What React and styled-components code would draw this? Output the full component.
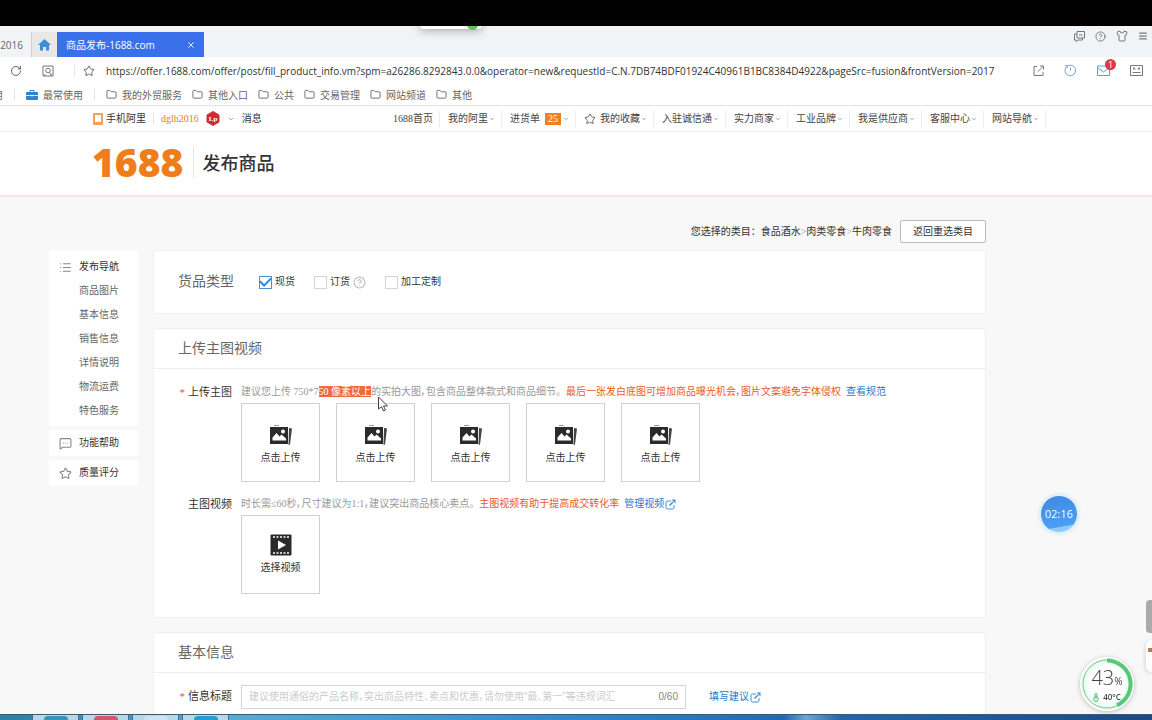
import React, { useState } from 'react';
import styled, { createGlobalStyle } from 'styled-components';
import {
  ChevronDown,
  CircleQuestionMark,
  Folder,
  List,
  Menu,
  MessageSquareMore,
  RotateCw,
  Shirt,
  Star,
  X,
} from 'lucide-react';

const uiFont = '"Open Sans", "Noto Sans", "Noto Sans CJK SC", sans-serif';
const pageFont = '"Liberation Serif", "Noto Sans CJK SC", sans-serif';

const GlobalStyle = createGlobalStyle`
  * {
    box-sizing: border-box;
  }

  body {
    margin: 0;
    background: #f8f8f8;
    color: #333;
    font: 10px/20px ${pageFont};
    overflow: hidden;
  }

  button, input {
    font: inherit;
    color: inherit;
  }

  a {
    color: inherit;
    text-decoration: none;
  }

  svg {
    flex: none;
  }
`;

const Screen = styled.div`
  display: flex;
  flex-direction: column;
  height: 100vh;
  overflow: hidden;
`;

/* ---------- browser ---------- */

const TopEdge = styled.div`
  position: relative;
  z-index: 2;
  flex: none;
  height: 26px;
  background: #000;
`;

const HiddenPill = styled.div`
  position: absolute;
  z-index: 1;
  top: 10px;
  left: 420px;
  width: 62px;
  height: 19px;
  background: #fff;
  border-radius: 4px;
  box-shadow: 0 2px 8px rgba(0, 0, 0, 0.3);

  &::after {
    content: '';
    position: absolute;
    right: 4px;
    bottom: -1px;
    width: 11px;
    height: 11px;
    border-radius: 50%;
    background: #5cc653;
  }
`;

const TabStrip = styled.div`
  display: flex;
  flex: none;
  align-items: flex-end;
  height: 31px;
  background: #f1f4f7;
  font-family: ${uiFont};
  color: #666;
`;

const BackTab = styled.button`
  display: flex;
  justify-content: flex-end;
  align-items: center;
  width: 31px;
  height: 25px;
  padding: 0 8px 0 0;
  border: 0;
  background: none;
`;

const HomeTab = styled.button`
  display: flex;
  align-items: center;
  justify-content: center;
  width: 26px;
  height: 25px;
  padding: 0;
  border: 0;
  border-left: 1px solid #cfcfcf;
  background: #e9e8e7;
`;

const ActiveTab = styled.div`
  display: flex;
  align-items: center;
  justify-content: space-between;
  width: 147px;
  height: 25px;
  padding: 0 8px 0 9px;
  background: #3a71ea;
  color: #fff;
`;

const IconButton = styled.button`
  display: flex;
  align-items: center;
  justify-content: center;
  padding: 0;
  border: 0;
  background: none;
`;

const WindowTools = styled.div`
  display: flex;
  align-self: flex-start;
  gap: 10px;
  margin-left: auto;
  padding: 4px 4px 0 0;
`;

const AddressBar = styled.div`
  display: flex;
  flex: none;
  align-items: center;
  height: 27px;
  padding: 0 9px 0 10px;
  background: #fff;
  color: #777;
`;

const AddressLeft = styled.div`
  display: flex;
  align-items: center;
  gap: 20px;
`;

const Divider = styled.span`
  flex: none;
  width: 1px;
  height: 12px;
  background: #e4e4e4;
`;

const UrlInput = styled.input`
  flex: 1;
  min-width: 0;
  margin: 0 12px 0 11px;
  padding: 0;
  border: 0;
  outline: 0;
  background: none;
  font-family: ${uiFont};
  color: #333;
`;

const AddressRight = styled.div`
  display: flex;
  align-items: center;
  gap: 20px;
`;

const MailButton = styled(IconButton)`
  position: relative;
`;

const MailCount = styled.span`
  position: absolute;
  top: -6px;
  right: -6px;
  width: 11px;
  height: 11px;
  border-radius: 50%;
  background: #dd3b3f;
  color: #fff;
  font: 9px/11px ${uiFont};
`;

const BookmarkBar = styled.div`
  display: flex;
  flex: none;
  align-items: center;
  gap: 11px;
  height: 22px;
  background: #fff;
  border-bottom: 1px solid #e2e2e2;
  font-family: ${uiFont};
  color: #666;
`;

const ClippedMark = styled.span`
  display: flex;
  flex: none;
  justify-content: flex-end;
  width: 3px;
  overflow: hidden;
`;

const Bookmark = styled.a`
  display: flex;
  align-items: center;
  gap: 5px;
  white-space: nowrap;
`;

/* ---------- site header ---------- */

const SiteNav = styled.nav`
  display: flex;
  flex: none;
  align-items: center;
  justify-content: space-between;
  height: 26px;
  padding: 0 106px 0 93px;
  background: #fff;
  border-bottom: 1px solid #ececec;
  white-space: nowrap;
`;

const NavGroup = styled.div`
  display: flex;
  align-items: center;
  gap: ${(p) => p.$gap || 0}px;
`;

const NavLink = styled.a`
  display: flex;
  align-items: center;
  height: 18px;
  gap: 1px;
  padding: 0 6px 0 8px;
  border-right: 1px solid #eee;
  color: #444;
`;

const PhoneLink = styled.a`
  display: flex;
  align-items: center;
  gap: 3px;
`;

const UserLink = styled.a`
  color: #ee7a22;
`;

const CountBadge = styled.span`
  margin: 0 1px 0 4px;
  padding: 0 3px;
  background: #ee7f22;
  color: #fff;
  line-height: 12px;
`;

const SiteHeader = styled.header`
  display: flex;
  flex: none;
  align-items: center;
  height: 65px;
  padding: 0 0 4px 92px;
  background: #fff;
  border-bottom: 2px solid #fae6de;
`;

const Logo = styled.a`
  padding-right: 10px;
  border-right: 1px solid #e6e6e6;
  font: 800 39px/32px "Open Sans", "Noto Sans", sans-serif;
  color: #ef7d1a;
`;

const PageTitle = styled.h1`
  margin: 0 0 0 8px;
  font: 500 18px/24px "Noto Sans CJK SC", sans-serif;
  color: #333;
`;

/* ---------- page ---------- */

const Page = styled.div`
  flex: 1;
  min-height: 0;
  padding: 23px 166px 0 49px;
  overflow: hidden;
`;

const CategoryRow = styled.div`
  display: flex;
  align-items: center;
  justify-content: flex-end;
  gap: 8px;
  margin-bottom: 7px;

  i {
    font-style: normal;
    color: #999;
  }
`;

const OutlineButton = styled.button`
  height: 23px;
  padding: 0 12px;
  border: 1px solid #bbb;
  border-radius: 2px;
  background: #fff;
`;

const Columns = styled.div`
  display: grid;
  grid-template-columns: 89px minmax(0, 1fr);
  gap: 15px;
  align-items: start;
`;

const Sidebar = styled.aside`
  display: flex;
  flex-direction: column;
  gap: 4px;
`;

const SideCard = styled.div`
  padding: ${(p) => p.$pad || '1px 0'};
  border-radius: 2px;
  background: #fff;
`;

const SideItem = styled.a`
  display: grid;
  grid-template-columns: 20px 1fr;
  align-items: center;
  height: 24px;
  padding-left: 10px;
  color: ${(p) => (p.$head ? '#333' : '#666')};

  svg {
    color: #888;
  }

  span {
    grid-column: 2;
  }
`;

const Main = styled.main`
  display: flex;
  flex-direction: column;
  gap: 14px;
`;

const Card = styled.section`
  background: #fff;
  border: 1px solid #efefef;
  border-radius: 3px;
`;

const TypeRow = styled.div`
  display: flex;
  align-items: center;
  gap: 25px;
  height: 62px;
  padding-left: 24px;
`;

const CardTitle = styled.h2`
  margin: 0;
  font-size: 14px;
  font-weight: 400;
  line-height: 20px;
  color: #666;
`;

const CardHead = styled.div`
  padding: 10px 24px 9px;
  border-bottom: 1px solid #f0f0f0;
`;

const CardBody = styled.div`
  display: flex;
  flex-direction: column;
  gap: 11px;
  padding: 12px 24px 23px;
`;

const Options = styled.div`
  display: flex;
  align-items: center;
  gap: 19px;
`;

const Option = styled.label`
  display: flex;
  align-items: center;
  gap: 3px;
`;

const Checkbox = styled.input`
  appearance: none;
  display: flex;
  align-items: center;
  justify-content: center;
  width: 13px;
  height: 13px;
  margin: 0;
  border: 1px solid #d4d4d4;
  background: #fff;

  &:checked {
    border-color: #4a94d6;
  }

  &:checked::after {
    content: '';
    width: 9px;
    height: 5px;
    margin-bottom: 3px;
    border: solid #2f83d0;
    border-width: 0 0 2px 2px;
    transform: rotate(-45deg);
  }
`;

const Field = styled.div`
  display: flex;
  gap: 9px;
`;

const FieldLabel = styled.label`
  flex: none;
  width: 54px;
  font-size: 11px;
  line-height: 22px;
  text-align: right;
  white-space: nowrap;

  b {
    margin-right: 3px;
    font-weight: 400;
    color: #e0524d;
  }
`;

const FieldContent = styled.div`
  flex: 1;
  min-width: 0;
`;

const Hint = styled.p`
  display: flex;
  align-items: center;
  gap: 5px;
  margin: 0;
  line-height: 22px;
  white-space: nowrap;
  color: #999;
  font-feature-settings: 'palt';
`;

const Warn = styled.span`
  color: #ea5b1b;
`;

const BlueLink = styled.a`
  display: inline-flex;
  align-items: center;
  gap: 1px;
  color: #1a7bd4;
`;

const Selected = styled.mark`
  position: relative;
  background: #ef6a3a;
  color: #fff;
`;

const Pointer = styled.svg`
  position: absolute;
  top: 10px;
  right: -18px;
`;

const Tiles = styled.div`
  display: flex;
  flex-wrap: wrap;
  gap: 16px;
`;

const Tile = styled.button`
  display: flex;
  flex-direction: column;
  align-items: center;
  justify-content: center;
  gap: 2px;
  width: 79px;
  height: 79px;
  padding: ${(p) => (p.$video ? 2 : 6)}px 0 0;
  border: 1px solid #d0d0d0;
  background: #fff;
`;

const TitleBox = styled.div`
  display: flex;
  flex: 0 1 445px;
  height: 24px;
  padding: 0 7px;
  border: 1px solid #d4d4d4;
  color: #888;
  font-family: "Liberation Sans", "Noto Sans CJK SC", sans-serif;
`;

const TitleInput = styled.input`
  flex: 1;
  min-width: 0;
  padding: 0;
  border: 0;
  outline: 0;
  font-feature-settings: 'palt';

  &::placeholder {
    color: #ccc;
  }
`;

const Counter = styled.span`
  line-height: 22px;
`;

const TitleRow = styled.div`
  display: flex;
  flex: 1;
  align-items: center;
  gap: 23px;
`;

/* ---------- desktop ---------- */

const Taskbar = styled.footer`
  display: flex;
  flex: none;
  gap: 3px;
  height: 6px;
  padding-left: 32px;
  border-top: 1px solid #3c5b73;
  background: linear-gradient(90deg, #2c7f9f 0, #5aa9d6 20%, #3b93cf 42%, #2169b4 68%, #6fa3d4 70%, #2366aa 73%, #1c4a86 100%);
  overflow: hidden;
`;

const TaskButton = styled.button`
  display: flex;
  justify-content: center;
  width: 47px;
  margin: 0;
  padding: 1px 0 0;
  border: 1px solid #456f8c;
  border-width: 0 1px;
  background: #b5d8ea;

  &::after {
    content: '';
    width: 24px;
    height: 8px;
    border-radius: 4px 4px 0 0;
    background: ${(p) => p.$color};
  }
`;

const TimerBubble = styled.div`
  position: fixed;
  right: 74px;
  bottom: 187px;
  width: 38px;
  height: 38px;
  border: 1px solid #d9f1ff;
  border-radius: 50%;
  background: linear-gradient(170deg, #4088e4, #4ba0f2 80%, #8ccbfb 82%);
  box-shadow: 0 0 4px #b9dff5;
  color: #fff;
  font: 11px/36px ${uiFont};
  text-align: center;
`;

const ScrollThumb = styled.div`
  position: fixed;
  right: 0;
  bottom: 87px;
  width: 6px;
  height: 33px;
  border-radius: 4px 0 0 4px;
  background: #aaa;
`;

const SidePopup = styled.div`
  position: fixed;
  right: 0;
  bottom: 48px;
  width: 6px;
  height: 32px;
  border-radius: 10px 0 0 10px;
  background: #fff;
  box-shadow: 0 1px 5px rgba(0, 0, 0, 0.2);

  &::before {
    content: '';
    display: block;
    width: 4px;
    height: 4px;
    margin: 8px 0 0 2px;
    background: #b5795c;
  }
`;

const Gauge = styled.div`
  position: fixed;
  right: 18px;
  bottom: 9px;
  width: 54px;
  height: 54px;
  padding: 10px 0 0;
  border-radius: 50%;
  background: radial-gradient(#fff 45%, #e4f9e9 66%, #fff 68%);
  box-shadow: 0 1px 5px rgba(0, 0, 0, 0.25);
  font-family: ${uiFont};
  text-align: center;
  color: #444;
`;

const GaugeRing = styled.svg`
  position: absolute;
  inset: 0;
`;

const GaugeValue = styled.div`
  position: relative;
  font: 300 20px/22px ${uiFont};

  small {
    font-size: 10px;
    font-weight: 400;
  }
`;

const GaugeTemp = styled.div`
  position: relative;
  display: flex;
  align-items: center;
  justify-content: center;
  gap: 4px;
  font-size: 8px;
  font-weight: 600;
  line-height: 10px;
`;

/* ---------- drawings ---------- */

const PictureIcon = () => (
  <svg width="24" height="22" viewBox="0 0 24 22">
    <path d="M5 1.500h5" stroke="#999" />
    <path d="M1 3h18v17H1z" fill="#2b2b2b" />
    <path d="M3.500 16.500v-3l4-4.500 3 3.500 2-2 4.500 4v2z" fill="#fff" />
    <circle cx="14" cy="7.500" r="2" fill="#fff" />
    <path d="M20 4l3 .5-2 16-1.500.5z" fill="#444" />
  </svg>
);

const FilmIcon = () => (
  <svg width="22" height="22" viewBox="0 0 22 22">
    <rect x=".5" y=".5" width="21" height="21" rx="1" fill="#2b2b2b" />
    <path d="M3 3h17M3 19h17" stroke="#fff" strokeWidth="1.500" strokeDasharray="2 1.500" />
    <path d="M8 6.500v9l8-4.500z" fill="#fff" />
  </svg>
);

const OpenIcon = () => (
  <svg width="11" height="11" viewBox="0 0 11 11" fill="none" stroke="#3b8fdb">
    <path d="M6 2H2.500Q1 2 1 3.500v5Q1 10 2.500 10h5Q9 10 9 8.500V6" />
    <path d="M4.500 6.500L8 3" strokeWidth="1.500" />
    <path d="M6.500.5h4v4z" fill="#3b8fdb" stroke="none" />
  </svg>
);

const sideLinks = ['商品图片', '基本信息', '销售信息', '详情说明', '物流运费', '特色服务'];
const bookmarks = ['我的外贸服务', '其他入口', '公共', '交易管理', '网站频道', '其他'];
const navItems = [
  { text: '我的阿里' },
  { text: '进货单', count: 25 },
  { text: '我的收藏', star: true },
  { text: '入驻诚信通' },
  { text: '实力商家' },
  { text: '工业品牌' },
  { text: '我是供应商' },
  { text: '客服中心' },
  { text: '网站导航' },
];

const Browser = () => (
  <>
    <TopEdge />
    <HiddenPill />
    <TabStrip>
      <BackTab>2016</BackTab>
      <HomeTab aria-label="Home">
        <svg width="13" height="12" viewBox="0 0 13 12" fill="#3c8fd3">
          <path d="M6.500 0L13 6h-2v5.500H8V8H5v3.500H2V6H0z" />
        </svg>
      </HomeTab>
      <ActiveTab>
        <span>商品发布-1688.com</span>
        <IconButton aria-label="Close tab"><X size={10} strokeWidth={2} /></IconButton>
      </ActiveTab>
      <WindowTools>
        <IconButton aria-label="Feedback">
          <svg width="11" height="11" viewBox="0 0 11 11" fill="none" stroke="#777">
            <path d="M3 .5h7.500v6.500H3zM3 3H.5v6H2v1.500L4 9h4.500V7M5 4h3.500" />
          </svg>
        </IconButton>
        <IconButton aria-label="Help"><CircleQuestionMark size={11} color="#777" /></IconButton>
        <IconButton aria-label="Skin"><Shirt size={12} color="#777" /></IconButton>
        <IconButton aria-label="Menu"><Menu size={10} color="#777" strokeWidth={3} /></IconButton>
      </WindowTools>
    </TabStrip>
    <AddressBar>
      <AddressLeft>
        <IconButton aria-label="Reload"><RotateCw size={12} color="#666" /></IconButton>
        <IconButton aria-label="Page lookup">
          <svg width="12" height="12" viewBox="0 0 12 12" fill="none" stroke="#777">
            <path d="M1 1h10v10H1zM3 11v-2M9 11v-2" />
            <circle cx="6" cy="5.500" r="2.300" />
            <path d="M7.500 7.500L9 9.500" />
          </svg>
        </IconButton>
        <NavGroup $gap={8}>
          <Divider />
          <IconButton aria-label="Bookmark"><Star size={12} color="#666" /></IconButton>
        </NavGroup>
      </AddressLeft>
      <UrlInput
        aria-label="Address"
        defaultValue="https://offer.1688.com/offer/post/fill_product_info.vm?spm=a26286.8292843.0.0&operator=new&requestId=C.N.7DB74BDF01924C40961B1BC8384D4922&pageSrc=fusion&frontVersion=2017"
      />
      <AddressRight>
        <IconButton aria-label="Share">
          <svg width="11" height="11" viewBox="0 0 11 11" fill="none" stroke="#777">
            <path d="M4 1.500H1v9h9V7M7 1h3.500v3.500M10 1.500L5 6.500" />
          </svg>
        </IconButton>
        <IconButton aria-label="History">
          <svg width="13" height="13" viewBox="0 0 13 13" fill="none" stroke="#68a9d8">
            <path d="M3 2.300A5.300 5.300 0 1 0 6.500 1.200Q4.500 1.200 3 2.300M1 1.500l2.500.5-.5 2M6.500 3.500V6.500" />
          </svg>
        </IconButton>
        <MailButton aria-label="Mail">
          <svg width="13" height="11" viewBox="0 0 13 11" fill="none" stroke="#5f9fcb">
            <path d="M.5 1h12v9.500H.5zM.5 2.500l6 4.500 6-4.500" />
          </svg>
          <MailCount>1</MailCount>
        </MailButton>
        <IconButton aria-label="Cards">
          <svg width="13" height="11" viewBox="0 0 13 11" fill="none" stroke="#777">
            <path d="M.5.500h12v10H.5zM3 4h2.500M7.500 4H10M2.500 7.500h8" />
            <path d="M3 3h2M8 3h2" />
          </svg>
        </IconButton>
      </AddressRight>
    </AddressBar>
    <BookmarkBar>
      <ClippedMark>用</ClippedMark>
      <Divider />
      <Bookmark href="#">
        <svg width="12" height="10" viewBox="0 0 12 10">
          <path d="M4 2V.5h4V2" fill="none" stroke="#2f83cc" />
          <rect y="2" width="12" height="8" rx="1" fill="#2f83cc" />
          <path d="M0 5.500h12M6 4.500v2" stroke="#d8ebf8" />
        </svg>
        最常使用
      </Bookmark>
      <Divider />
      <NavGroup $gap={10}>
        {bookmarks.map((name) => (
          <Bookmark key={name} href="#">
            <Folder size={11} />
            {name}
          </Bookmark>
        ))}
      </NavGroup>
    </BookmarkBar>
  </>
);

const Header = () => (
  <>
    <SiteNav>
      <NavGroup $gap={7}>
        <PhoneLink href="#">
          <svg width="10" height="12" viewBox="0 0 10 12">
            <rect width="10" height="12" rx="1" fill="#f5a05a" />
            <rect x="2" y="2" width="6" height="7" fill="#fff" />
          </svg>
          手机阿里
        </PhoneLink>
        <Divider />
        <UserLink href="#">dglh2016</UserLink>
        <svg width="14" height="15" viewBox="0 0 14 15">
          <path d="M7 .5l6 3.500v7l-6 3.500L1 11V4z" fill="#cf2b36" stroke="#cf2b36" strokeLinejoin="round" />
          <text x="7" y="10" fill="#fff" fontSize="7" fontWeight="700" textAnchor="middle">Lp</text>
        </svg>
        <ChevronDown size={8} color="#888" />
        <a href="#">消息</a>
      </NavGroup>
      <NavGroup>
        <NavLink href="#">1688首页</NavLink>
        {navItems.map((item) => (
          <NavLink key={item.text} href="#">
            {item.star && <Star size={12} color="#666" strokeWidth={2} style={{ marginRight: 3 }} />}
            {item.text}
            {item.count && <CountBadge>{item.count}</CountBadge>}
            <ChevronDown size={6} color="#888" strokeWidth={3} />
          </NavLink>
        ))}
      </NavGroup>
    </SiteNav>
    <SiteHeader>
      <Logo href="#">1688</Logo>
      <PageTitle>发布商品</PageTitle>
    </SiteHeader>
  </>
);

const SideMenu = () => (
  <Sidebar>
    <SideCard $pad="5px 0 3px">
      <SideItem href="#" $head>
        <List size={13} strokeWidth={2} />
        <span>发布导航</span>
      </SideItem>
      {sideLinks.map((name) => (
        <SideItem key={name} href="#"><span>{name}</span></SideItem>
      ))}
    </SideCard>
    <SideCard>
      <SideItem href="#" $head>
        <MessageSquareMore size={13} />
        <span>功能帮助</span>
      </SideItem>
    </SideCard>
    <SideCard>
      <SideItem href="#" $head>
        <Star size={13} />
        <span>质量评分</span>
      </SideItem>
    </SideCard>
  </Sidebar>
);

const App = () => {
  const [types, setTypes] = useState({ stock: true, order: false, custom: false });
  const [title, setTitle] = useState('');

  const toggle = (key) => setTypes({ ...types, [key]: !types[key] });

  return (
    <Screen>
      <GlobalStyle />
      <Browser />
      <Header />
      <Page>
        <CategoryRow>
          <span>您选择的类目：食品酒水<i>&gt;</i>肉类零食<i>&gt;</i>牛肉零食</span>
          <OutlineButton>返回重选类目</OutlineButton>
        </CategoryRow>
        <Columns>
          <SideMenu />
          <Main>
            <Card>
              <TypeRow>
                <CardTitle>货品类型</CardTitle>
                <Options>
                  <Option>
                    <Checkbox type="checkbox" checked={types.stock} onChange={() => toggle('stock')} />
                    现货
                  </Option>
                  <Option>
                    <Checkbox type="checkbox" checked={types.order} onChange={() => toggle('order')} />
                    订货
                    <CircleQuestionMark size={13} color="#bbb" strokeWidth={2} />
                  </Option>
                  <Option>
                    <Checkbox type="checkbox" checked={types.custom} onChange={() => toggle('custom')} />
                    加工定制
                  </Option>
                </Options>
              </TypeRow>
            </Card>

            <Card>
              <CardHead><CardTitle>上传主图视频</CardTitle></CardHead>
              <CardBody>
                <Field>
                  <FieldLabel as="span"><b>*</b>上传主图</FieldLabel>
                  <FieldContent>
                    <Hint>
                      <span>
                        建议您上传 750*7
                        <Selected>
                          50 像素以上
                          <Pointer width="12" height="16" viewBox="0 0 12 16">
                            <path d="M1.500 1v12l3-2.500 2 4.500 2-1-2-4h4z" fill="#fff" stroke="#444" />
                          </Pointer>
                        </Selected>
                        的实拍大图，包含商品整体款式和商品细节。
                      </span>
                      <Warn>最后一张发白底图可增加商品曝光机会，图片文案避免字体侵权</Warn>
                      <BlueLink href="#">查看规范</BlueLink>
                    </Hint>
                    <Tiles>
                      {[1, 2, 3, 4, 5].map((n) => (
                        <Tile key={n}>
                          <PictureIcon />
                          点击上传
                        </Tile>
                      ))}
                    </Tiles>
                  </FieldContent>
                </Field>
                <Field>
                  <FieldLabel as="span">主图视频</FieldLabel>
                  <FieldContent>
                    <Hint>
                      <span>时长需≤60秒，尺寸建议为1:1，建议突出商品核心卖点。</span>
                      <Warn>主图视频有助于提高成交转化率</Warn>
                      <BlueLink href="#">管理视频<OpenIcon /></BlueLink>
                    </Hint>
                    <Tiles>
                      <Tile $video>
                        <FilmIcon />
                        选择视频
                      </Tile>
                    </Tiles>
                  </FieldContent>
                </Field>
              </CardBody>
            </Card>

            <Card>
              <CardHead><CardTitle>基本信息</CardTitle></CardHead>
              <CardBody>
                <Field>
                  <FieldLabel htmlFor="offer-title"><b>*</b>信息标题</FieldLabel>
                  <TitleRow>
                    <TitleBox>
                      <TitleInput
                        id="offer-title"
                        maxLength={60}
                        value={title}
                        onChange={(e) => setTitle(e.target.value)}
                        placeholder="建议使用通俗的产品名称，突出商品特性、卖点和优惠，请勿使用“最、第一”等违规词汇"
                      />
                      <Counter>{title.length}/60</Counter>
                    </TitleBox>
                    <BlueLink href="#">填写建议<OpenIcon /></BlueLink>
                  </TitleRow>
                </Field>
              </CardBody>
            </Card>
          </Main>
        </Columns>
      </Page>
      <Taskbar>
        <TaskButton aria-label="Task 1" $color="#3c93b5" />
        <TaskButton aria-label="Task 2" $color="#d9536a" />
        <TaskButton aria-label="Task 3" $color="#cfe4f0" />
        <TaskButton aria-label="Task 4" $color="#2a9cc9" />
      </Taskbar>

      <TimerBubble>02:16</TimerBubble>
      <ScrollThumb />
      <SidePopup />
      <Gauge>
        <GaugeRing viewBox="0 0 54 54" fill="none">
          <circle cx="27" cy="27" r="24" stroke="#7fc79a" />
          <path d="M27 3.500A23.500 23.500 0 0 1 37 48.300" stroke="#56c878" strokeWidth="4" />
        </GaugeRing>
        <GaugeValue>43<small>%</small></GaugeValue>
        <GaugeTemp>
          <svg width="6" height="9" viewBox="0 0 6 9" fill="none" stroke="#3bb265">
            <path d="M2 4V1.500a1 1 0 0 1 2 0V4a2.300 2.300 0 1 1-2 0zM3 3v3" />
          </svg>
          40°C
        </GaugeTemp>
      </Gauge>
    </Screen>
  );
};

export default App;
